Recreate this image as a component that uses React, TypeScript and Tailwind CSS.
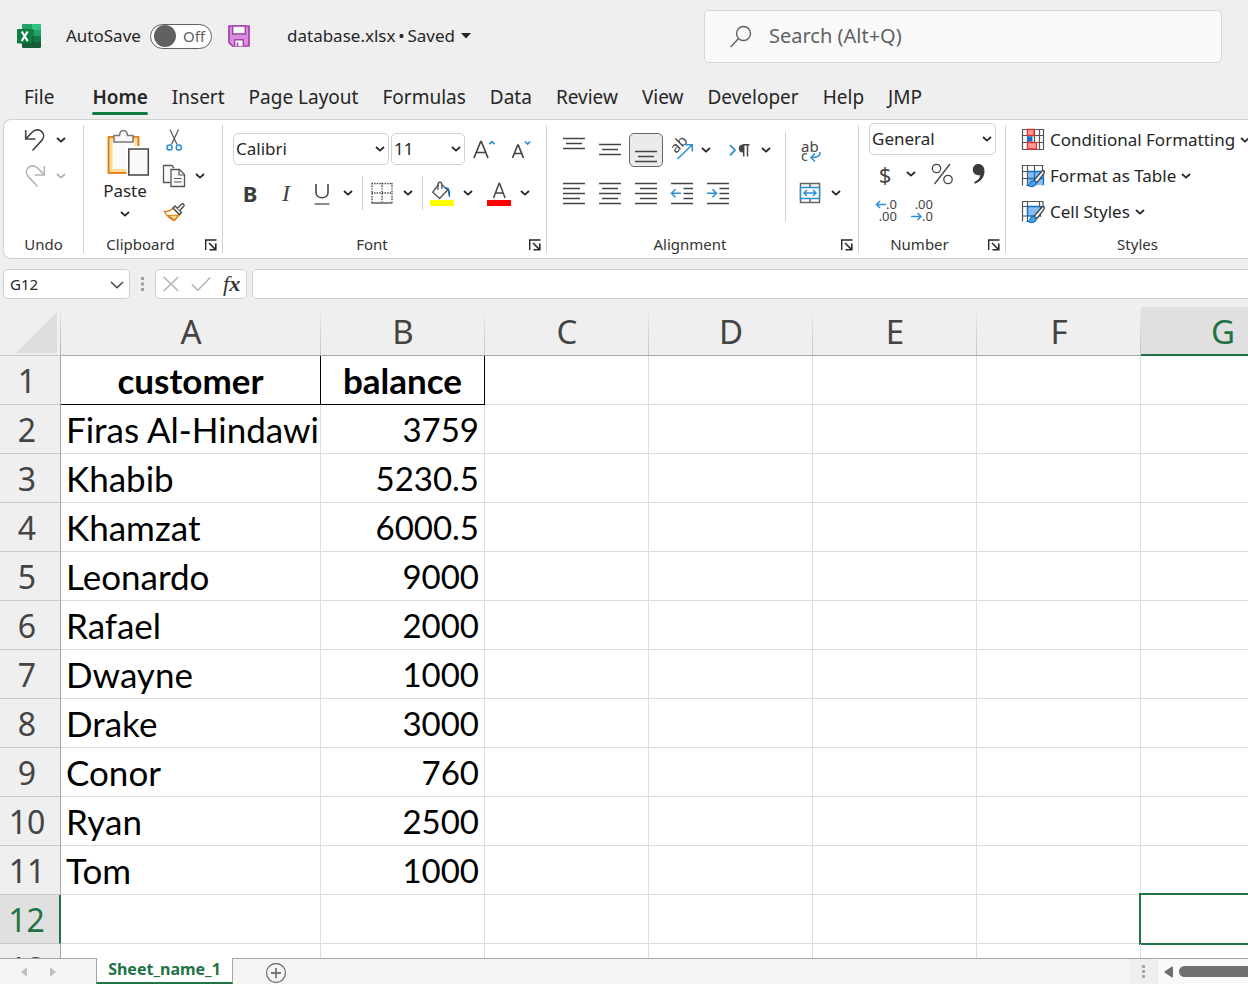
import type { ReactNode } from "react";

const UI_FONT = "font-['Noto_Sans','Open_Sans',sans-serif]";

const TABS = ["File", "Home", "Insert", "Page Layout", "Formulas", "Data", "Review", "View", "Developer", "Help", "JMP"];

const COLUMNS = ["A", "B", "C", "D", "E", "F", "G"];

const RECORDS: [string, string][] = [
  ["customer", "balance"],
  ["Firas Al-Hindawi", "3759"],
  ["Khabib", "5230.5"],
  ["Khamzat", "6000.5"],
  ["Leonardo", "9000"],
  ["Rafael", "2000"],
  ["Dwayne", "1000"],
  ["Drake", "3000"],
  ["Conor", "760"],
  ["Ryan", "2500"],
  ["Tom", "1000"],
  ["", ""],
  ["", ""],
];

const ACTIVE_ROW = 12;
const ACTIVE_COLUMN = "G";

/* ---------- small shared pieces ---------- */

function Chevron({ color = "#262626" }: { color?: string }) {
  return (
    <svg width="10" height="6" viewBox="0 0 10 6" fill="none" stroke={color} strokeWidth="1.8" aria-hidden="true">
      <path d="M1 1l4 3.6L9 1" />
    </svg>
  );
}

function MenuButton({ label, color, className = "w-4" }: { label: string; color?: string; className?: string }) {
  return (
    <button type="button" aria-label={label} className={`flex h-8 shrink-0 items-center justify-center ${className}`}>
      <Chevron color={color} />
    </button>
  );
}

function IconButton({ label, children, active = false }: { label: string; children: ReactNode; active?: boolean }) {
  return (
    <span className="flex h-9 w-9 shrink-0 items-center justify-center">
      <button
        type="button"
        aria-label={label}
        aria-pressed={active}
        className={`flex h-[34px] w-[34px] items-center justify-center rounded-[5px] ${active ? "border border-[#666] bg-[#ebebeb]" : ""}`}
      >
        {children}
      </button>
    </span>
  );
}

function Svg({ children, size = 28 }: { children: ReactNode; size?: number }) {
  return (
    <svg width={size} height={size} viewBox={`0 0 ${size} ${size}`} fill="none" className="shrink-0 overflow-visible" aria-hidden="true">
      {children}
    </svg>
  );
}

function Divider() {
  return <div className="my-[5px] w-px shrink-0 bg-[#d1d1d1]" />;
}

function Group({ label, launcher = true, className = "", children }: { label: string; launcher?: boolean; className?: string; children: ReactNode }) {
  return (
    <section aria-label={label} className={`flex shrink-0 flex-col ${className}`}>
      <div className="h-[110px] pt-[2px]">{children}</div>
      <div className="flex h-7 items-center">
        <span className="flex-1 text-center text-[15px] text-[#333]">{label}</span>
        {launcher && (
          <button type="button" aria-label={`${label} settings`} className="w-[25px] pt-px pl-2">
            <svg width="12" height="12" viewBox="0 0 12 12" fill="none" stroke="#262626" aria-hidden="true">
              <path d="M.7 11V1H11.5" strokeWidth="1.4" />
              <path d="M4 4l6 6" strokeWidth="1.6" />
              <path d="M10.8 4.5v6.3H4.5" strokeWidth="1.6" />
            </svg>
          </button>
        )}
      </div>
    </section>
  );
}

function Dropdown({ label, value, className }: { label: string; value: string; className: string }) {
  return (
    <div className={`relative ${className}`}>
      <select aria-label={label} className="h-full w-full appearance-none rounded-[5px] border border-[#d1d1d1] bg-white pl-[2px] text-[17px] text-[#262626]">
        <option>{value}</option>
      </select>
      <span className="pointer-events-none absolute inset-y-0 right-1 flex items-center">
        <Chevron />
      </span>
    </div>
  );
}

/* ---------- icons ---------- */

function Lines({ rows }: { rows: [number, number, number][] }) {
  return (
    <Svg>
      {rows.map(([x1, x2, y]) => (
        <path key={y} d={`M${x1} ${y}H${x2}`} stroke="#444" strokeWidth="1.3" />
      ))}
    </Svg>
  );
}

function UndoIcon({ color, flip = false }: { color: string; flip?: boolean }) {
  return (
    <Svg size={24}>
      <g transform={flip ? "matrix(-1 0 0 1 24 0)" : undefined} stroke={color} strokeWidth="1.6">
        <path d="M2.7 2v9H12.5" />
        <path d="M3 10.6L9.2 4.2c3-3 7-3 9.400-.8 2.700 2.600 2.700 6.300.2 9L9.500 22.500" />
      </g>
    </Svg>
  );
}

function PasteIcon() {
  return (
    <svg width="50" height="48" viewBox="0 0 50 48" fill="none" className="overflow-visible" aria-hidden="true">
      <rect x="8.500" y="8" width="30" height="36" fill="#f9dc94" stroke="#e17a0e" strokeWidth="1.800" />
      <rect x="12.500" y="12" width="22" height="28" fill="#fafafa" />
      <path d="M14 13V6.500h5.500c.3-3.300 2-5 4-5s3.700 1.700 4 5H33V13z" fill="#fafafa" stroke="#777" strokeWidth="1.500" />
      <rect x="26.500" y="17" width="24" height="31" fill="#fff" />
      <rect x="28.800" y="20" width="19.500" height="26" fill="#fafafa" stroke="#444" strokeWidth="1.500" />
    </svg>
  );
}

function CutIcon() {
  return (
    <Svg size={24}>
      <path d="M8 1.500l7 15M16.500 1.500l-7 15" stroke="#555" strokeWidth="1.200" />
      <circle cx="7.500" cy="19.500" r="2.600" stroke="#2b8fd6" strokeWidth="1.500" />
      <circle cx="16.800" cy="19.500" r="2.600" stroke="#2b8fd6" strokeWidth="1.500" />
    </Svg>
  );
}

function CopyIcon() {
  return (
    <Svg size={24}>
      <path d="M8.500 18.500H1.500V1.500h8.500l2 2.500" fill="#fafafa" stroke="#555" strokeWidth="1.300" />
      <path d="M9 5.500h8.500l5 5V22.500H9z" fill="#fafafa" stroke="#555" strokeWidth="1.300" />
      <path d="M17 5.500v5.500h5.500M12 14.500h7.500M12 18h7.500" stroke="#555" strokeWidth="1.200" />
    </Svg>
  );
}

function PainterIcon() {
  return (
    <Svg size={24}>
      <path d="M2.500 11.500c3.500.3 6-.8 8.500-3.500l6.500 6.500-5 6C8.500 19.500 5 16 2.500 11.500z" fill="#fff" stroke="#e17a0e" strokeWidth="1.300" />
      <path d="M6 15.500l10.500-.5-4 5z" fill="#f9dc94" stroke="#e17a0e" strokeWidth="1.100" />
      <path d="M11 8l2-2 6.500 6.500-2 2z" fill="#fff" stroke="#444" strokeWidth="1.300" />
      <path d="M15.300 8.200l4.200-4c1.600-1.200 3.400.5 2.300 2.100l-4.200 4.200" fill="#fff" stroke="#444" strokeWidth="1.300" />
    </Svg>
  );
}

function BordersIcon() {
  return (
    <Svg>
      <path d="M3.500 4.500h21M3.500 14h21M4 4v19M14 4v19M24 4v19" stroke="#444" strokeWidth="1.300" strokeDasharray="1.400 1.200" />
      <path d="M3 24h21.500" stroke="#888" strokeWidth="1.800" />
    </Svg>
  );
}

function FillIcon() {
  return (
    <Svg>
      <path d="M10.500 5.500L4.800 13.200l6.800 6.300 8-8.500-6-5.500" stroke="#555" strokeWidth="1.400" />
      <path d="M10 11V5.500c0-3 3.800-3 3.800 0V10" stroke="#555" strokeWidth="1.300" />
      <path d="M17 8.500c3.500-1 5.700 1.500 5 10-2.400-1.500-1.500-5-2.500-7z" fill="#1a70c0" />
      <path d="M2 21h24v6H2z" fill="#ff0" />
    </Svg>
  );
}

function FontColorIcon() {
  return (
    <Svg>
      <path d="M8.500 19L14 4.500h.6l5.500 14.500M10.300 14h8" stroke="#444" strokeWidth="1.500" />
      <path d="M2 21h24v6H2z" fill="red" />
    </Svg>
  );
}

function GlyphSize({ grow }: { grow: boolean }) {
  return (
    <Svg>
      {grow ? (
        <>
          <path d="M5 23L11.700 6.500h.6L19 23M7.400 17.500h9.200" stroke="#444" strokeWidth="1.700" />
          <path d="M20.300 9.200l2.600-2.600 2.600 2.600" stroke="#2b8fd6" strokeWidth="1.700" />
        </>
      ) : (
        <>
          <path d="M7.500 23L12.700 10h.6L18.500 23M9.300 18.500h7.400" stroke="#444" strokeWidth="1.700" />
          <path d="M20 6.500l2.600 2.600 2.600-2.600" stroke="#2b8fd6" strokeWidth="1.700" />
        </>
      )}
    </Svg>
  );
}

function OrientationIcon() {
  return (
    <Svg>
      <text x="0" y="0" transform="translate(8 18) rotate(-45)" fontSize="15" fill="#444" className="font-['Noto_Sans',sans-serif]">ab</text>
      <path d="M9.500 23L24 9M17.500 8.800h6.800V15.500" stroke="#2b8fd6" strokeWidth="1.500" />
    </Svg>
  );
}

function DirectionIcon() {
  return (
    <Svg>
      <path d="M4 9l5 5.200-5 5.200" stroke="#2b8fd6" strokeWidth="1.800" />
      <path d="M18 8.500h-1.200a4 4 0 0 0 0 8H18z" fill="#444" />
      <path d="M17.700 20.500V8.700H23.500M21.500 8.700v11.800" stroke="#444" strokeWidth="1.500" />
    </Svg>
  );
}

function WrapIcon() {
  return (
    <Svg>
      <text x="5" y="16" fontSize="15" fill="#444" className="font-['Noto_Sans',sans-serif]">ab</text>
      <text x="5" y="25" fontSize="14" fill="#444" className="font-['Noto_Sans',sans-serif]">c</text>
      <path d="M24 16c.5 3.500-2 5.500-9 5.500M19 17.500l-4 4 4 4" stroke="#2b8fd6" strokeWidth="1.500" />
    </Svg>
  );
}

function MergeIcon() {
  return (
    <Svg>
      <path d="M4.500 4.500h19v19h-19zM14 4v4M14 20v4" stroke="#666" strokeWidth="1.500" />
      <path d="M4.500 8.500h19v11h-19z" fill="#fff" stroke="#2b8fd6" strokeWidth="1.500" />
      <path d="M8.500 14h11M11 11l-3 3 3 3M17 11l3 3-3 3" stroke="#2b8fd6" strokeWidth="1.500" />
    </Svg>
  );
}

function IndentIcon({ out }: { out: boolean }) {
  return (
    <Svg>
      <path d="M3 4.500h22M15.500 9.500H25M15.500 14.500H25M15.500 19.500H25M3 24.500h22" stroke="#444" strokeWidth="1.300" />
      <path d={out ? "M3.500 14.200H13M7.500 10.200l-4 4 4 4" : "M3 14.200h9M8.500 10.200l4 4-4 4"} stroke="#2b8fd6" strokeWidth="1.500" />
    </Svg>
  );
}

function DecimalIcon({ increase }: { increase: boolean }) {
  return (
    <Svg>
      <g fontSize="13" fill="#444" textAnchor="end" className="font-['Noto_Sans',sans-serif]">
        <text x="25" y="13">{increase ? ".0" : ".00"}</text>
        <text x="25" y="25">{increase ? ".00" : ".0"}</text>
      </g>
      <path
        d={increase ? "M4 8.500h10M8 5l-3.500 3.500L8 12" : "M3 20.500h10M9.500 17l3.500 3.500-3.500 3.500"}
        stroke="#2b8fd6"
        strokeWidth="1.500"
      />
    </Svg>
  );
}

function GridBase() {
  return <path d="M1.500 1v20.500M1 1.500h21.500M6.500 1v20.500M13.500 1v6.500M21.500 1v20.500M1 7.500h21M1 14.500h5" stroke="#555" strokeWidth="1.200" />;
}

function ConditionalIcon() {
  return (
    <Svg size={24}>
      <path d="M1.500 1v20.500M6.500 1v20.500M13.500 1v20.500M18.500 1v20.500M22.500 1v20.500M1 1.500h22M1 7.500h22M1 14.500h22M1 21.500h22" stroke="#555" strokeWidth="1.200" />
      <path d="M6.500 1.500h6.500v6H6.500z" fill="#ff9a9a" stroke="#e8342c" strokeWidth="1.300" />
      <path d="M6 8.200h5.500v5.600H6z" fill="#1a70c0" />
      <path d="M6.500 14.500h9v6.500h-9z" fill="#ff9a9a" stroke="#e8342c" strokeWidth="1.300" />
    </Svg>
  );
}

function BrushOverlay() {
  return (
    <>
      <path d="M22.700 6.500c1 .8.7 2-.2 3.500l-6.500 8.500-3-2.300 7.700-8.700c.7-.8 1.400-1.200 2-1z" fill="#fff" stroke="#444" strokeWidth="1.300" />
      <path d="M6.500 21.500c2-.2 2.300-1.200 3-3 1-2.300 4.500-2.600 5.500 0 .8 3-3.500 5.500-8.500 3z" fill="#4ea3e8" stroke="#1a70c0" strokeWidth="1.200" />
    </>
  );
}

function TableIcon() {
  return (
    <Svg size={24}>
      <GridBase />
      <path d="M7 7.500h15.500v13.500H7z" fill="#84bdf0" />
      <path d="M13.500 7.500v13.500M7 14.500h15.500M7 7.500h15.500v13.500" stroke="#1a70c0" strokeWidth="1.300" />
      <BrushOverlay />
    </Svg>
  );
}

function CellIcon() {
  return (
    <Svg size={24}>
      <path d="M1.500 1v20.500M1 1.500h21.500M6.500 1v20.500M18.500 1v5M22 1v5M1 6.500h21M1 16h6" stroke="#555" strokeWidth="1.200" />
      <path d="M6.500 6.500h13v9.500h-13z" fill="#84bdf0" stroke="#1a70c0" strokeWidth="1.400" />
      <BrushOverlay />
    </Svg>
  );
}

function ExcelLogo() {
  return (
    <svg width="24" height="24" viewBox="0 0 24 24" className="shrink-0" aria-label="Excel">
      <rect x="5" width="19" height="24" rx="1.500" fill="#185c37" />
      <path d="M6.500 0H15v6H5V1.500A1.500 1.500 0 0 1 6.500 0z" fill="#21a366" />
      <path d="M15 0h7.500A1.500 1.500 0 0 1 24 1.500V6h-9z" fill="#33c481" />
      <path d="M5 6h10v6H5z" fill="#107c41" />
      <path d="M15 6h9v6h-9z" fill="#21a366" />
      <path d="M15 12h9v6h-9z" fill="#107c41" />
      <path d="M5 5h10.500c.8 0 1.300.5 1.300 1.300v12.400c0 .8-.5 1.300-1.300 1.300H5z" fill="#0b3d22" opacity=".4" />
      <rect y="5" width="15.500" height="14.500" rx="1.300" fill="#107c41" />
      <path d="M4.700 7.500l6 9.500M10.700 7.500l-6 9.500" stroke="#fff" strokeWidth="2.200" />
    </svg>
  );
}

function SaveIcon() {
  return (
    <svg width="22" height="22" viewBox="0 0 22 22" fill="none" aria-hidden="true">
      <path d="M1 1h20v20H4.500L1 17.500z" fill="#d78fdc" stroke="#a33fae" strokeWidth="1.700" />
      <path d="M4.700 1h12.600v8H4.700z" fill="#fafafa" stroke="#a33fae" strokeWidth="1.400" />
      <path d="M6.700 21v-6.300h8.600V21" fill="#fafafa" stroke="#a33fae" strokeWidth="1.400" />
      <path d="M9.500 17.500V21" stroke="#a33fae" strokeWidth="1.500" />
    </svg>
  );
}

/* ---------- page sections ---------- */

function TitleBar() {
  return (
    <header className="flex h-[72px] shrink-0 items-center pl-[17px] pr-[26px]">
      <div className="flex w-[687px] shrink-0 items-center">
        <ExcelLogo />
        <label htmlFor="autosave" className="ml-[25px] w-[84px] text-[17px]">AutoSave</label>
        <button id="autosave" type="button" role="switch" aria-checked="false" className="flex h-[25px] w-[62px] items-center gap-[7px] rounded-full border border-[#616161] bg-white pl-[3px] text-[15px] text-[#616161]">
          <span className="h-[22px] w-[22px] rounded-full bg-[#616161]" />
          Off
        </button>
        <button type="button" aria-label="Save" className="ml-4">
          <SaveIcon />
        </button>
        <button type="button" className="ml-[37px] flex items-center gap-[6px] text-[17px]">
          <span>database.xlsx&thinsp;•&thinsp;Saved</span>
          <svg width="10" height="6" viewBox="0 0 10 6" fill="#262626" aria-hidden="true">
            <path d="M0 0h10L5 5.500z" />
          </svg>
        </button>
      </div>
      <label className="flex h-[53px] min-w-0 flex-1 items-center gap-[17px] rounded-[5px] border border-[#d6d6d6] bg-[#fafafa] pl-[25px]">
        <svg width="22" height="23" viewBox="0 0 22 23" fill="none" stroke="#616161" strokeWidth="1.400" aria-hidden="true">
          <circle cx="13.500" cy="8.500" r="7" />
          <path d="M8.500 13.500L.7 22" />
        </svg>
        <input type="search" aria-label="Search" placeholder="Search (Alt+Q)" className="min-w-0 flex-1 bg-transparent pb-px text-[20px] outline-none placeholder:text-[#616161]" />
      </label>
    </header>
  );
}

function TabStrip() {
  return (
    <nav className="flex h-[47px] shrink-0 gap-6 pl-6 text-[19px]">
      {TABS.map((tab) => (
        <a
          key={tab}
          href="#ribbon"
          className={`relative h-[43px] shrink-0 pt-[11px] leading-7 ${tab === "File" ? "mr-[14px]" : ""} ${tab === "Home" ? "font-semibold" : ""}`}
        >
          {tab}
          {tab === "Home" && <span className="absolute inset-x-0 bottom-0 h-[3px] rounded-full bg-[#107c41]" />}
        </a>
      ))}
    </nav>
  );
}

function Ribbon() {
  return (
    <div id="ribbon" className="ml-[3px] flex h-[140px] shrink-0 overflow-hidden rounded-l-lg border-y border-l border-[#d1d1d1] bg-white">
      <Group label="Undo" launcher={false} className="w-[79px]">
        <div className="flex h-9 items-center pl-[19px]">
          <button type="button" aria-label="Undo"><UndoIcon color="#444" /></button>
          <MenuButton label="Undo history" className="ml-[6px] w-4" />
        </div>
        <div className="flex h-9 items-center pl-[19px]">
          <button type="button" aria-label="Redo"><UndoIcon color="#b5b5b5" flip /></button>
          <MenuButton label="Redo history" color="#b5b5b5" className="ml-[6px] w-4" />
        </div>
      </Group>
      <Divider />

      <Group label="Clipboard" className="w-[138px]">
        <div className="flex">
          <button type="button" className="ml-4 flex w-[50px] flex-col items-center pt-[7px] text-[17px]">
            <PasteIcon />
            <span className="leading-[28px]">Paste</span>
            <span className="pt-[6px]"><Chevron /></span>
          </button>
          <div className="ml-3">
            <button type="button" aria-label="Cut" className="flex h-9 items-center"><CutIcon /></button>
            <div className="flex h-9 items-center">
              <button type="button" aria-label="Copy"><CopyIcon /></button>
              <MenuButton label="Copy options" className="ml-[6px] w-4" />
            </div>
            <button type="button" aria-label="Format Painter" className="flex h-9 items-center"><PainterIcon /></button>
          </div>
        </div>
      </Group>
      <Divider />

      <Group label="Font" className="w-[323px]">
        <div className="flex h-[53px] items-center pt-px pl-[10px]">
          <Dropdown label="Font family" value="Calibri" className="h-8 w-[156px]" />
          <Dropdown label="Font size" value="11" className="ml-[2px] h-8 w-[74px]" />
          <IconButton label="Increase font size"><GlyphSize grow /></IconButton>
          <IconButton label="Decrease font size"><GlyphSize grow={false} /></IconButton>
        </div>
        <div className="flex h-9 items-center pl-[9px]">
          <IconButton label="Bold"><span className="text-[22px] leading-7 font-bold text-[#3b3b3b]">B</span></IconButton>
          <IconButton label="Italic"><span className="font-['Liberation_Serif',serif] text-[24px] leading-7 italic text-[#444]">I</span></IconButton>
          <IconButton label="Underline">
            <Svg>
              <path d="M8 5v8.500c0 7 12 7 12 0V5" stroke="#444" strokeWidth="1.600" />
              <path d="M6.500 25h15" stroke="#666" strokeWidth="1.500" />
            </Svg>
          </IconButton>
          <MenuButton label="Underline options" />
          <div className="ml-[6px] mr-px h-[34px] w-px bg-[#d1d1d1]" />
          <IconButton label="Borders"><BordersIcon /></IconButton>
          <MenuButton label="Border options" />
          <div className="ml-[6px] mr-px h-[34px] w-px bg-[#d1d1d1]" />
          <IconButton label="Fill color"><FillIcon /></IconButton>
          <MenuButton label="Fill color options" />
          <div className="w-[5px]" />
          <IconButton label="Font color"><FontColorIcon /></IconButton>
          <MenuButton label="Font color options" />
        </div>
      </Group>
      <Divider />

      <Group label="Alignment" className="w-[311px]">
        <div className="flex pt-[10px] pl-[9px]">
          <div className="flex w-[229px] flex-col gap-[7px]">
            <div className="flex items-center">
              <IconButton label="Top align"><Lines rows={[[3, 25, 2.5], [6, 22, 7.5], [3, 25, 12.5]]} /></IconButton>
              <IconButton label="Middle align"><Lines rows={[[3, 25, 8.5], [6, 22, 13.5], [3, 25, 18.5]]} /></IconButton>
              <IconButton label="Bottom align" active><Lines rows={[[3, 25, 15.5], [6, 22, 20.5], [3, 25, 25.5]]} /></IconButton>
              <IconButton label="Orientation"><OrientationIcon /></IconButton>
              <MenuButton label="Orientation options" className="w-3" />
              <div className="w-[10px]" />
              <IconButton label="Text direction"><DirectionIcon /></IconButton>
              <MenuButton label="Text direction options" />
            </div>
            <div className="flex items-center">
              <IconButton label="Align left"><Lines rows={[[3, 25, 4.5], [3, 20, 9.5], [3, 25, 14.5], [3, 20, 19.5], [3, 25, 24.5]]} /></IconButton>
              <IconButton label="Center"><Lines rows={[[3, 25, 4.5], [6, 22, 9.5], [3, 25, 14.5], [6, 22, 19.5], [3, 25, 24.5]]} /></IconButton>
              <IconButton label="Align right"><Lines rows={[[3, 25, 4.5], [8, 25, 9.5], [3, 25, 14.5], [8, 25, 19.5], [3, 25, 24.5]]} /></IconButton>
              <IconButton label="Decrease indent"><IndentIcon out /></IconButton>
              <IconButton label="Increase indent"><IndentIcon out={false} /></IconButton>
            </div>
          </div>
          <div className="h-[90px] w-px bg-[#d1d1d1]" />
          <div className="ml-[6px] flex flex-col gap-[7px]">
            <IconButton label="Wrap text"><WrapIcon /></IconButton>
            <div className="flex items-center">
              <IconButton label="Merge and center"><MergeIcon /></IconButton>
              <MenuButton label="Merge options" />
            </div>
          </div>
        </div>
      </Group>
      <Divider />

      <Group label="Number" className="w-[146px]">
        <div className="flex h-[34px] items-center pl-[10px]">
          <Dropdown label="Number format" value="General" className="h-8 w-[127px]" />
        </div>
        <div className="flex h-9 items-center pl-2 text-[#444]">
          <IconButton label="Accounting format"><span className="text-[22px] leading-7">$</span></IconButton>
          <MenuButton label="Currency options" />
          <div className="w-[5px]" />
          <IconButton label="Percent style">
            <Svg>
              <path d="M22 4L6.500 24" stroke="#444" strokeWidth="1.300" />
              <circle cx="8.500" cy="8.500" r="4.200" stroke="#444" strokeWidth="1.300" />
              <circle cx="20" cy="19.500" r="4.200" stroke="#444" strokeWidth="1.300" />
            </Svg>
          </IconButton>
          <IconButton label="Comma style">
            <Svg>
              <path d="M14 4c4 0 6.500 2.700 6.500 7 0 6-3.500 11-10 12.700v-1.900c3.500-1.300 5.500-3.800 5.600-6.800-3.600.9-7.300-1.300-7.300-5.300 0-3.300 2.200-5.700 5.200-5.700z" fill="#3b3b3b" />
            </Svg>
          </IconButton>
        </div>
        <div className="flex h-9 items-center pl-[9px]">
          <IconButton label="Increase decimal"><DecimalIcon increase /></IconButton>
          <IconButton label="Decrease decimal"><DecimalIcon increase={false} /></IconButton>
        </div>
      </Group>
      <Divider />

      <Group label="Styles" launcher={false} className="w-[263px]">
        {[
          { name: "Conditional Formatting", icon: <ConditionalIcon /> },
          { name: "Format as Table", icon: <TableIcon /> },
          { name: "Cell Styles", icon: <CellIcon /> },
        ].map(({ name, icon }) => (
          <button key={name} type="button" className="flex h-9 items-center gap-[5px] pl-[15px] text-[17px] whitespace-nowrap">
            {icon}
            {name}
            <Chevron />
          </button>
        ))}
      </Group>
    </div>
  );
}

function FormulaBar() {
  return (
    <div className="flex h-12 shrink-0 items-center overflow-hidden pt-[2px] pl-[3px]">
      <div className="relative h-[30px] w-[127px] shrink-0">
        <input aria-label="Name box" defaultValue="G12" className="h-full w-full rounded-[5px] border border-[#d1d1d1] bg-white pl-[6px] text-[15px]" />
        <svg className="pointer-events-none absolute top-3 right-[6px]" width="14" height="8" viewBox="0 0 14 8" fill="none" stroke="#444" strokeWidth="1.500" aria-hidden="true">
          <path d="M1 1l6 5.800L13 1" />
        </svg>
      </div>
      <svg className="mx-[11px] shrink-0" width="3" height="14" viewBox="0 0 3 14" fill="#a0a0a0" aria-hidden="true">
        <path d="M0 0h3v3H0zM0 5.500h3v3H0zM0 11h3v3H0z" />
      </svg>
      <div className="flex h-[30px] w-[92px] shrink-0 items-center rounded-[5px] border border-[#d1d1d1] bg-white pl-[7px]">
        <button type="button" aria-label="Cancel">
          <svg width="16" height="16" viewBox="0 0 16 16" fill="none" stroke="#b0b0b0" strokeWidth="1.400"><path d="M.8 1l14.400 14M15.200 1L.8 15" /></svg>
        </button>
        <button type="button" aria-label="Enter" className="ml-3">
          <svg width="20" height="16" viewBox="0 0 20 16" fill="none" stroke="#b0b0b0" strokeWidth="1.500"><path d="M.8 8.500l6 5.700L19.300 1.500" /></svg>
        </button>
        <button type="button" aria-label="Insert function" className="ml-3 font-['Liberation_Serif',serif] text-[22px] leading-7 font-bold text-[#333] italic">
          <span className="font-normal">f</span><span>x</span>
        </button>
      </div>
      <input aria-label="Formula" className="-mr-2 ml-[5px] h-[30px] min-w-0 flex-1 rounded-[5px] border border-[#d1d1d1] bg-white px-2" />
    </div>
  );
}

function Sheet() {
  return (
    <main className="min-h-0 flex-1 overflow-hidden bg-white">
      <table className="w-[1305px] table-fixed border-separate border-spacing-0">
        <colgroup>
          <col className="w-[61px]" />
          <col className="w-[260px]" />
          {COLUMNS.slice(1).map((c) => <col key={c} className="w-[164px]" />)}
        </colgroup>
        <thead>
          <tr className="h-[49px] text-[33px] leading-[44px] text-[#444]">
            <td className="border-b border-[#c8c8c8] bg-[#efefef] bg-linear-to-b from-[#efefef] to-[#b0b0b0] bg-size-[1px_100%] bg-right bg-no-repeat p-0">
              <button type="button" aria-label="Select all" className="block pt-[2px] pl-4">
                <svg width="41" height="41" viewBox="0 0 41 41" aria-hidden="true"><path d="M41 0v41H0z" fill="#dedede" /></svg>
              </button>
            </td>
            {COLUMNS.map((c) => (
              <th
                key={c}
                scope="col"
                className={`p-0 pt-[2px] font-normal ${
                  c === ACTIVE_COLUMN
                    ? "border-b-2 border-[#217346] bg-[#e0e0e0] text-[#217346]"
                    : "border-b border-[#a6a6a6] bg-[#efefef] bg-linear-to-b from-[#efefef] to-[#c4c4c4] bg-size-[1px_100%] bg-right bg-no-repeat"
                }`}
              >
                {c}
              </th>
            ))}
          </tr>
        </thead>
        <tbody>
          {RECORDS.map(([customer, balance], i) => {
            const row = i + 1;
            const head = row === 1;
            const edge = head ? "border-black font-bold text-center" : "border-[#dedede]";
            return (
              <tr key={row} className="h-[49px] font-['Lato',sans-serif] text-[35px] leading-[48px] whitespace-nowrap text-black">
                <th
                  scope="row"
                  className={`border-b border-b-[#c8c8c8] p-0 pt-[2px] pr-[6px] font-['Noto_Sans','Open_Sans',sans-serif] text-[32px] leading-[46px] font-normal ${
                    row === ACTIVE_ROW ? "border-r-2 border-r-[#217346] bg-[#e0e0e0] text-[#217346]" : "border-r border-r-[#a6a6a6] bg-[#efefef] text-[#444]"
                  }`}
                >
                  {row}
                </th>
                <td className={`border-r border-b p-0 ${head ? "" : "pl-[5px]"} ${edge}`}>{customer}</td>
                <td className={`border-r border-b p-0 ${head ? "" : "pr-[5px] text-right text-[33px]"} ${edge}`}>{balance}</td>
                {COLUMNS.slice(2).map((c) => (
                  <td key={c} className="relative border-r border-b border-[#dedede] p-0">
                    {row === ACTIVE_ROW && c === ACTIVE_COLUMN && <span className="absolute -inset-[2px] border-2 border-[#217346]" />}
                  </td>
                ))}
              </tr>
            );
          })}
        </tbody>
      </table>
    </main>
  );
}

function SheetTabs() {
  return (
    <footer className="flex h-[26px] shrink-0 border-t border-[#a6a6a6] bg-[#f5f5f5]">
      <div className="flex w-24 shrink-0 items-center gap-[23px] pl-[21px]">
        <button type="button" aria-label="Previous sheet">
          <svg width="6" height="10" viewBox="0 0 6 10" fill="#c0c0c0"><path d="M6 0v10L0 5z" /></svg>
        </button>
        <button type="button" aria-label="Next sheet">
          <svg width="6" height="10" viewBox="0 0 6 10" fill="#c0c0c0"><path d="M0 0v10l6-5z" /></svg>
        </button>
      </div>
      <button type="button" className="-mt-px w-[137px] shrink-0 border-x border-b-2 border-x-[#a6a6a6] border-b-[#217346] bg-white pb-[2px] text-[16px] leading-[22px] font-bold text-[#217346]">
        Sheet_name_1
      </button>
      <button type="button" aria-label="New sheet" className="ml-8 pt-[3px]">
        <svg width="22" height="22" viewBox="0 0 22 22" fill="none" stroke="#777">
          <circle cx="11" cy="11" r="9.500" strokeWidth="1.300" />
          <path d="M11 6v10M6 11h10" strokeWidth="1.800" />
        </svg>
      </button>
      <div className="ml-auto flex w-[29px] items-center justify-center bg-[#efefef]">
        <svg width="3" height="13" viewBox="0 0 3 13" fill="#a8a8a8" aria-hidden="true">
          <path d="M0 0h3v3H0zM0 5h3v3H0zM0 10h3v3H0z" />
        </svg>
      </div>
      <div className="flex w-[90px] shrink-0 items-center overflow-hidden bg-[#f9f9f9] pl-[6px]">
        <button type="button" aria-label="Scroll left">
          <svg width="9" height="12" viewBox="0 0 9 12" fill="#6e6e6e"><path d="M8 .5c.6 0 1 .4 1 1v9c0 .6-.4 1-1 1L.5 6.500v-1z" /></svg>
        </button>
        <div className="-mr-2 ml-[6px] h-[11px] flex-1 rounded-full bg-[#6e6e6e]" />
      </div>
    </footer>
  );
}

export default function App() {
  return (
    <div className={`flex h-screen flex-col overflow-hidden bg-[#efefef] text-[#262626] ${UI_FONT}`}>
      <TitleBar />
      <TabStrip />
      <Ribbon />
      <FormulaBar />
      <Sheet />
      <SheetTabs />
    </div>
  );
}
